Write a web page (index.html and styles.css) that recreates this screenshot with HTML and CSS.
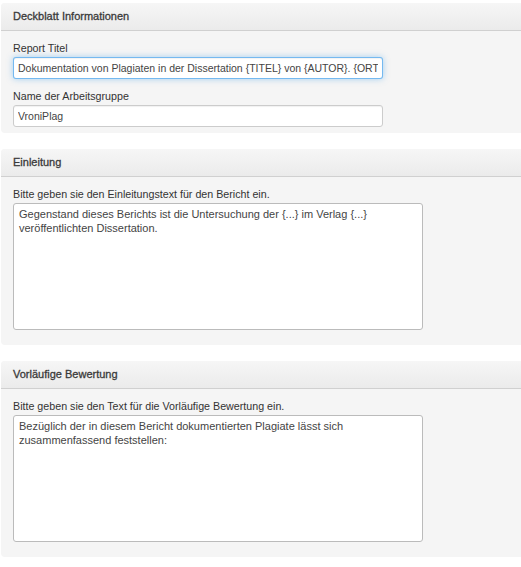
FILE: index.html
```html
<!DOCTYPE html>
<html lang="de">
<head>
<meta charset="utf-8">
<title>Bericht</title>
<link rel="stylesheet" href="styles.css">
</head>
<body>
<div class="page">
  <section class="panel">
    <div class="panel-head">Deckblatt Informationen</div>
    <div class="panel-body compact">
      <label class="lbl">Report Titel</label>
      <input class="field focus" type="text" value="Dokumentation von Plagiaten in der Dissertation {TITEL} von {AUTOR}. {ORT}, {JAHR}">
      <label class="lbl">Name der Arbeitsgruppe</label>
      <input class="field" type="text" value="VroniPlag">
    </div>
  </section>
  <section class="panel">
    <div class="panel-head">Einleitung</div>
    <div class="panel-body">
      <label class="lbl">Bitte geben sie den Einleitungstext für den Bericht ein.</label>
      <textarea class="area">Gegenstand dieses Berichts ist die Untersuchung der {...} im Verlag {...} veröffentlichten Dissertation.</textarea>
    </div>
  </section>
  <section class="panel">
    <div class="panel-head">Vorläufige Bewertung</div>
    <div class="panel-body">
      <label class="lbl">Bitte geben sie den Text für die Vorläufige Bewertung ein.</label>
      <textarea class="area">Bezüglich der in diesem Bericht dokumentierten Plagiate lässt sich zusammenfassend feststellen:</textarea>
    </div>
  </section>
</div>
</body>
</html>
```

FILE: styles.css
```css
html, body {
  margin: 0;
  padding: 0;
  background: #fff;
}
body {
  font-family: "Liberation Sans", Arial, sans-serif;
  font-size: 10.7px;
  color: #333;
  overflow: hidden;
}
.page {
  padding: 3px 0 0 1px;
  display: flex;
  flex-direction: column;
  gap: 16px;
}
.panel {
  width: 530px;
  background: #f5f5f5;
  border-radius: 4px;
}
.panel-head {
  height: 27px;
  line-height: 27px;
  padding-left: 12px;
  font-size: 11px;
  color: #3a3a3a;
  -webkit-text-stroke: 0.3px #3a3a3a;
  background: linear-gradient(#f6f6f6, #ebebeb);
  border-bottom: 1px solid #d0d0d0;
  border-radius: 4px 4px 0 0;
}
.panel-body {
  padding: 8px 12px 8px 12px;
  display: flex;
  flex-direction: column;
  align-items: flex-start;
}
.panel-body.compact {
  padding-bottom: 6px;
}
.lbl {
  line-height: 18px;
  color: #333;
}
.field {
  box-sizing: border-box;
  width: 370px;
  height: 22px;
  margin: 0 0 8px 0;
  padding: 2px 4px;
  font-family: "Liberation Sans", Arial, sans-serif;
  font-size: 10.5px;
  color: #444;
  background: #fff;
  border: 1px solid #ccc;
  border-radius: 3px;
  box-shadow: inset 0 1px 1px rgba(0,0,0,0.06);
  outline: none;
}
.field.focus {
  border-color: rgba(82,168,236,0.8);
  box-shadow: inset 0 1px 1px rgba(0,0,0,0.05), 0 0 6px rgba(82,168,236,0.5);
}
.field:last-child {
  margin-bottom: 0;
}
.area {
  box-sizing: border-box;
  width: 410px;
  height: 127px;
  margin: 0 0 7px 0;
  padding: 3px 5px;
  font-family: "Liberation Sans", Arial, sans-serif;
  font-size: 11px;
  line-height: 14px;
  color: #444;
  background: #fff;
  border: 1px solid #bbb;
  border-radius: 3px;
  resize: none;
  outline: none;
}
```
